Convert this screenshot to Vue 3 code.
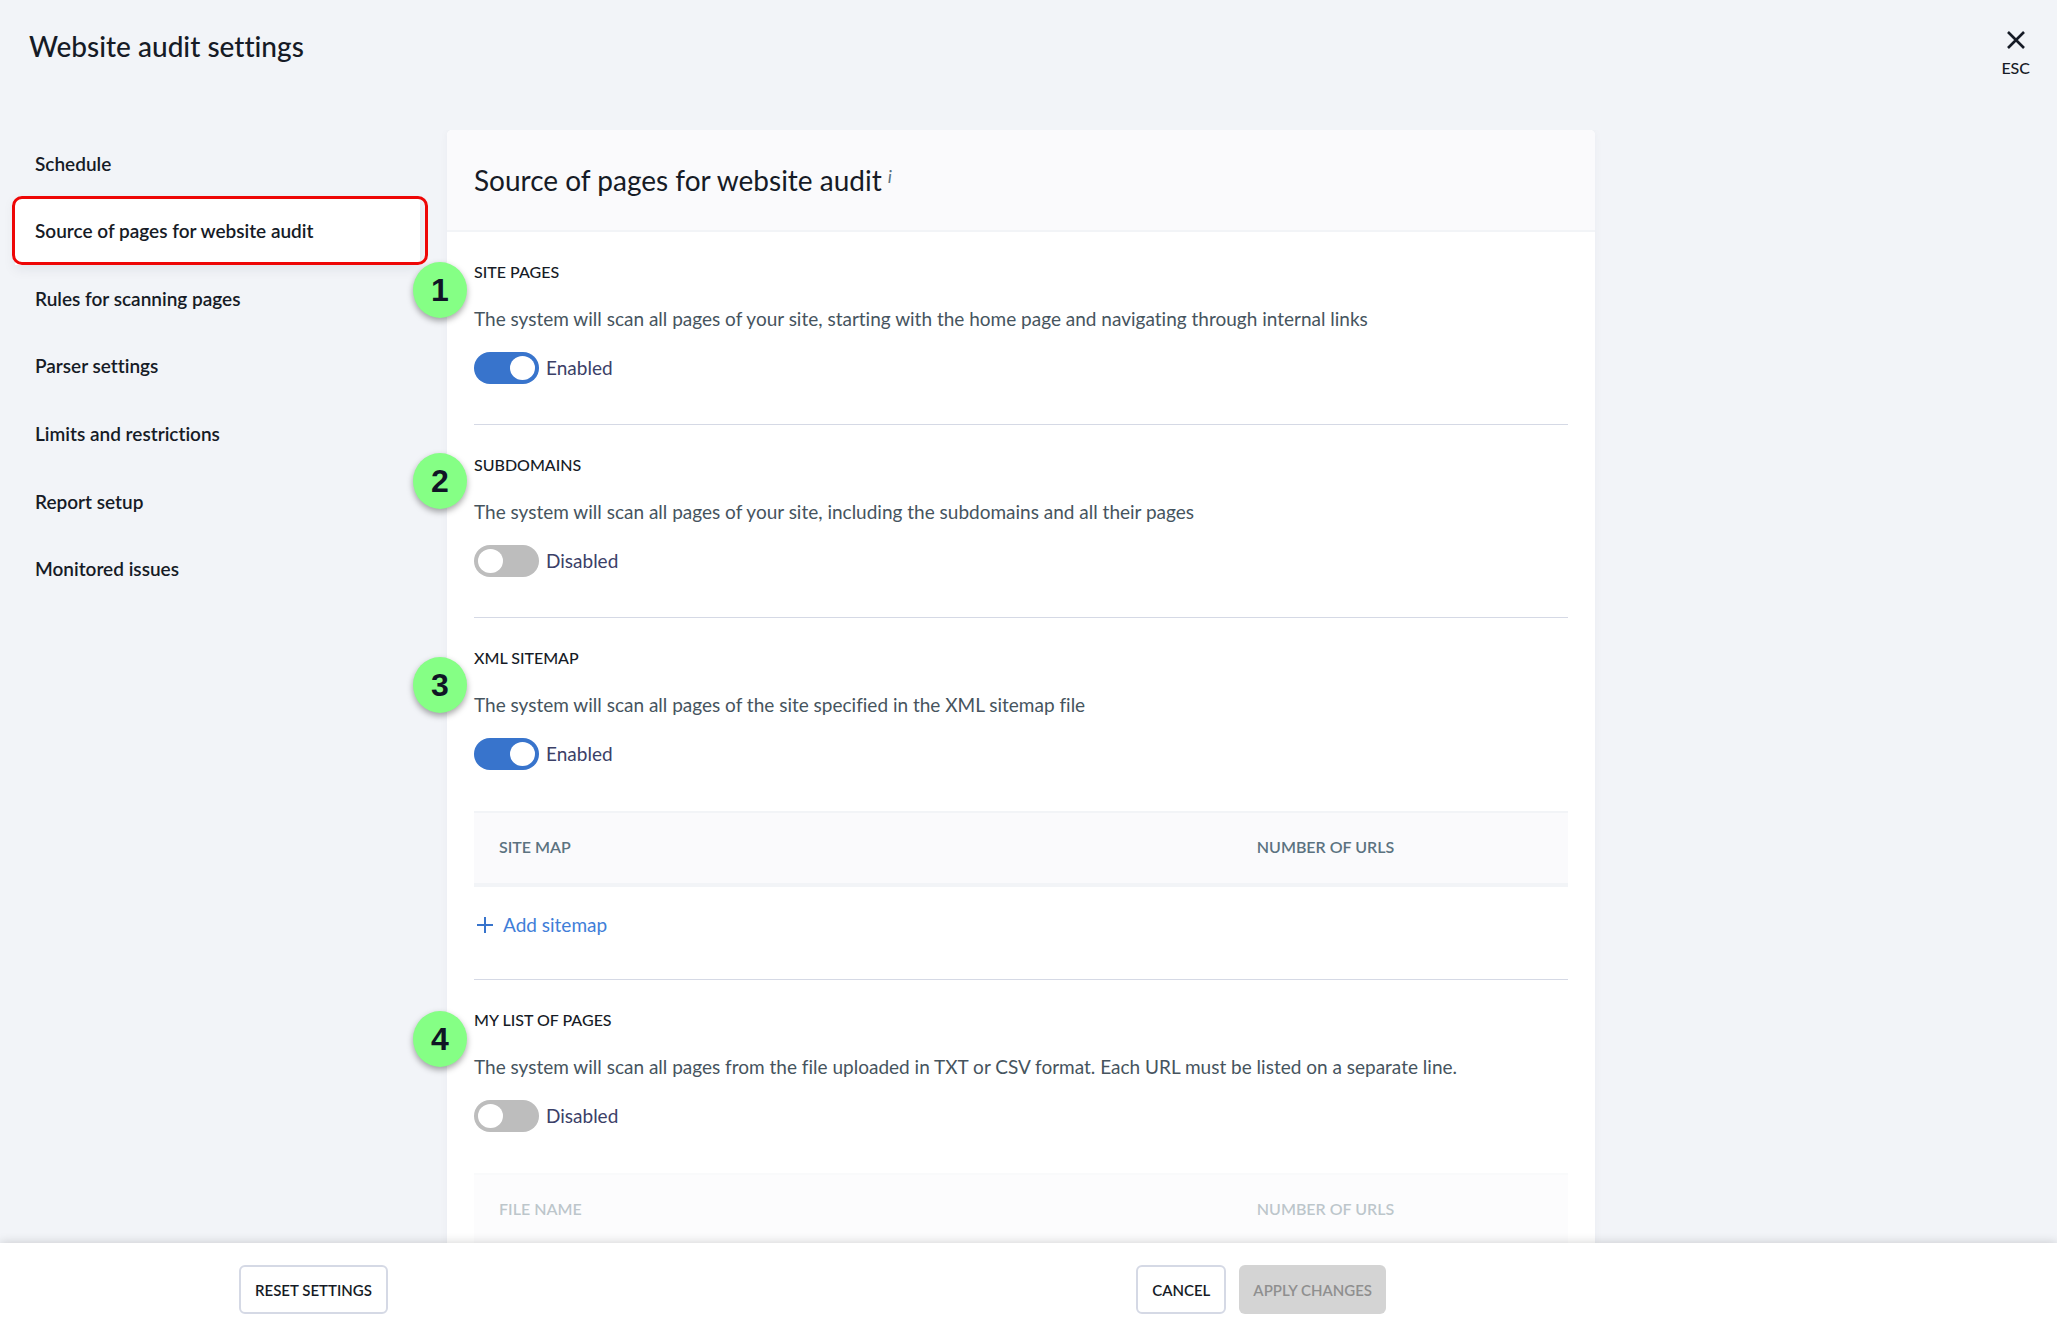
<script setup>
import { ref, reactive } from 'vue'

const navItems = [
  'Schedule',
  'Source of pages for website audit',
  'Rules for scanning pages',
  'Parser settings',
  'Limits and restrictions',
  'Report setup',
  'Monitored issues',
]
const activeItem = ref('Source of pages for website audit')

// markerTop is where the numbered pin sits over the section's left edge
const sections = reactive([
  {
    id: 'pages',
    title: 'Site pages',
    text: 'The system will scan all pages of your site, starting with the home page and navigating through internal links',
    enabled: true,
    markerTop: 30,
  },
  {
    id: 'subdomains',
    title: 'Subdomains',
    text: 'The system will scan all pages of your site, including the subdomains and all their pages',
    enabled: false,
    markerTop: 28,
  },
  {
    id: 'sitemap',
    title: 'XML sitemap',
    text: 'The system will scan all pages of the site specified in the XML sitemap file',
    enabled: true,
    markerTop: 39,
    columns: ['Site map', 'Number of URLs'],
    action: 'Add sitemap',
  },
  {
    id: 'list',
    title: 'My list of pages',
    text: 'The system will scan all pages from the file uploaded in TXT or CSV format. Each URL must be listed on a separate line.',
    enabled: false,
    markerTop: 31,
    columns: ['File name', 'Number of URLs'],
  },
])
</script>

<template>
  <div class="settings">
    <header class="topbar">
      <h1>Website audit settings</h1>
      <button type="button" class="close">
        <svg width="22" height="22" viewBox="0 0 22 22" aria-hidden="true">
          <path d="M3 3 L19 19 M19 3 L3 19" />
        </svg>
        <span>ESC</span>
      </button>
    </header>

    <div class="body">
      <nav class="sidebar">
        <a
          v-for="item in navItems"
          :key="item"
          href="#"
          class="nav-item"
          :class="{ active: item === activeItem }"
          @click.prevent="activeItem = item"
        >{{ item }}</a>
      </nav>

      <main class="card">
        <div class="card-head">
          <h2>Source of pages for website audit</h2>
          <i class="hint">i</i>
        </div>

        <section v-for="(s, i) in sections" :key="s.id" class="section">
          <span class="marker" :style="{ top: s.markerTop + 'px' }">{{ i + 1 }}</span>
          <h3>{{ s.title }}</h3>
          <p>{{ s.text }}</p>
          <label class="switch" :for="s.id">
            <input :id="s.id" v-model="s.enabled" type="checkbox" />
            <span>{{ s.enabled ? 'Enabled' : 'Disabled' }}</span>
          </label>
          <table v-if="s.columns" :class="{ faded: !s.enabled }">
            <thead>
              <tr>
                <th v-for="c in s.columns" :key="c" scope="col">{{ c }}</th>
              </tr>
            </thead>
          </table>
          <button v-if="s.action" type="button" class="add">
            <svg width="16" height="16" viewBox="0 0 16 16" aria-hidden="true">
              <path d="M8 0 V16 M0 8 H16" />
            </svg>
            {{ s.action }}
          </button>
        </section>
      </main>
    </div>

    <footer class="actions">
      <div class="actions-inner">
        <button type="button" class="btn reset">Reset settings</button>
        <button type="button" class="btn">Cancel</button>
        <button type="button" class="btn" disabled>Apply changes</button>
      </div>
    </footer>
  </div>
</template>

<style>
body {
  margin: 0;
}
</style>

<style scoped>
.settings {
  display: flex;
  flex-direction: column;
  height: 100vh;
  background: #f2f4f8;
  color: #161b26;
  font-family: Lato, "Noto Sans", sans-serif;
  font-size: 19px;
  line-height: 28px;
  font-variant-ligatures: none;
}

h1,
h2,
h3,
p {
  margin: 0;
}

button {
  font-family: inherit;
  font-variant-ligatures: inherit;
  cursor: pointer;
}

.topbar {
  display: flex;
  justify-content: space-between;
  align-items: flex-start;
  flex: none;
  height: 130px;
  padding: 28px 27px 0 29px;
  box-sizing: border-box;
}

h1 {
  font-size: 28px;
  line-height: 36px;
  font-weight: 500;
}

.close {
  display: flex;
  flex-direction: column;
  align-items: center;
  gap: 5px;
  padding: 1px 0 0;
  border: 0;
  background: none;
  color: inherit;
  font-size: 16px;
  line-height: 24px;
  font-weight: 500;
}

.close svg {
  fill: none;
  stroke: #161b26;
  stroke-width: 2.6;
}

.body {
  flex: 1;
  min-height: 0;
  display: flex;
  align-items: flex-start;
  gap: 27px;
  overflow-y: auto;
  scrollbar-width: none;
}

.sidebar {
  flex: none;
  display: grid;
  grid-auto-rows: 1fr;
  width: 420px;
  height: 473px;
}

.nav-item {
  position: relative;
  display: flex;
  align-items: center;
  margin-left: 15px;
  padding-left: 20px;
  color: inherit;
  font-weight: 600;
  text-decoration: none;
}

.nav-item.active {
  background: #fff;
  box-shadow: 0 4px 12px rgba(30, 40, 70, 0.08);
}

.nav-item.active::after {
  content: "";
  position: absolute;
  inset: -2px -8px 0 -3px;
  border: 3px solid #ee0606;
  border-radius: 10px;
}

.card {
  flex: 1;
  max-width: 1148px;
  background: #fff;
  border-radius: 5px 5px 0 0;
  box-shadow: 0 0 8px rgba(30, 40, 70, 0.04);
}

.card-head {
  display: flex;
  align-items: flex-start;
  gap: 6px;
  padding: 32px 27px;
  background: #fafafc;
  border-bottom: 2px solid #f2f4f7;
  border-radius: 5px 5px 0 0;
}

h2 {
  font-size: 28px;
  line-height: 36px;
  font-weight: 400;
}

.hint {
  color: #5b7280;
  font-size: 18px;
  line-height: 28px;
}

.section {
  position: relative;
  margin: 0 27px;
  padding: 28px 0 40px;
  border-bottom: 1px solid #d5d9e5;
}

.marker {
  position: absolute;
  left: -61px;
  width: 54px;
  height: 56px;
  border-radius: 50%;
  background: #85ff85;
  box-shadow: 0 3px 6px rgba(0, 0, 0, 0.35);
  color: #101525;
  font: bold 32px/56px "Liberation Sans", Arial, sans-serif;
  text-align: center;
}

h3 {
  margin-bottom: 21px;
  font-size: 16px;
  line-height: 24px;
  font-weight: 500;
  text-transform: uppercase;
}

p {
  margin-bottom: 19px;
  color: #46545e;
}

.switch {
  display: inline-flex;
  align-items: center;
  gap: 7px;
  height: 32px;
  vertical-align: top;
  color: #3b4067;
  cursor: pointer;
}

.switch input {
  appearance: none;
  display: flex;
  width: 65px;
  height: 32px;
  margin: 0;
  padding: 4px;
  box-sizing: border-box;
  border-radius: 16px;
  background: #bdbdbd;
  cursor: inherit;
}

.switch input::before {
  content: "";
  width: 25px;
  height: 24px;
  border-radius: 50%;
  background: #fff;
}

.switch input:checked {
  justify-content: flex-end;
  background: #3874cc;
}

table {
  width: 100%;
  margin-top: 41px;
  border-collapse: separate;
  border-spacing: 0;
  table-layout: fixed;
  background: #fafafc;
  border-top: 2px solid #f2f4f7;
  border-bottom: 4px solid #f2f4f7;
}

table.faded {
  opacity: 0.4;
}

th {
  padding: 22px 25px 24px;
  color: #5b7280;
  font-size: 16px;
  line-height: 24px;
  font-weight: 600;
  text-align: left;
  text-transform: uppercase;
}

th:first-child {
  width: 64.7%;
}

.add {
  display: flex;
  align-items: center;
  gap: 10px;
  margin-top: 24px;
  padding: 0 0 0 3px;
  border: 0;
  background: none;
  color: #3f7ed8;
  font-size: 19px;
  line-height: 28px;
}

.add svg {
  fill: none;
  stroke: #3874cc;
  stroke-width: 2;
}

.actions {
  position: relative;
  flex: none;
  background: #fff;
  box-shadow: 0 0 10px rgba(0, 0, 0, 0.18);
}

.actions-inner {
  display: flex;
  gap: 13px;
  max-width: 1386px;
  box-sizing: border-box;
  padding: 22px 0 16px 239px;
}

.btn {
  height: 49px;
  padding: 0 14px;
  border: 2px solid #d5d9e5;
  border-radius: 6px;
  background: #fff;
  color: #161b26;
  font-size: 15px;
  line-height: 24px;
  font-weight: 600;
  text-transform: uppercase;
}

.btn.reset {
  margin-right: auto;
}

.btn:disabled {
  border: 0;
  background: #d4d4d4;
  color: #8f8f8f;
  cursor: default;
}
</style>
